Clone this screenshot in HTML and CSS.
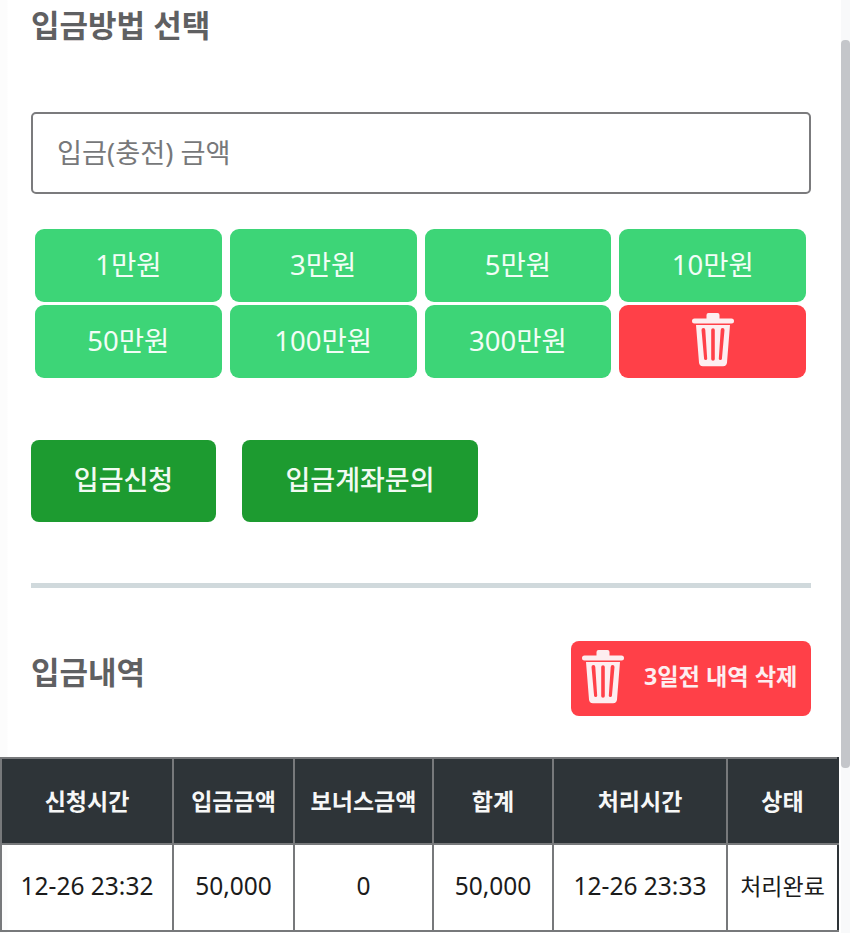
FILE: index.html
```html
<!DOCTYPE html>
<html lang="ko">
<head>
<meta charset="utf-8">
<title>입금</title>
<link rel="stylesheet" href="styles.css">
</head>
<body>
<svg class="sprite" width="0" height="0" aria-hidden="true">
  <symbol id="trash" viewBox="0 0 42 54">
    <path fill-rule="evenodd" d="M16.500 0h9a2 2 0 0 1 2 2v3.500H39.500a2.500 2.500 0 0 1 0 5H2.500a2.500 2.500 0 0 1 0-5H14.500V2a2 2 0 0 1 2-2ZM4 12h34l-3 37.500a4 4 0 0 1-4 3.700H11a4 4 0 0 1-4-3.700L4 12Zm5.500 5 2.600 29a1.600 1.600 0 0 0 3.100-.3L13.300 17a1.900 1.900 0 0 0-3.800 0Zm9.700 0v29a1.800 1.800 0 0 0 3.600 0V17a1.800 1.800 0 0 0-3.600 0Zm9.500 0-1.900 28.700a1.600 1.600 0 0 0 3.100.3l2.600-29a1.900 1.900 0 0 0-3.800 0Z"/>
  </symbol>
</svg>
<div class="viewport">
  <main class="page">
    <div class="content">
      <h2 class="title">입금방법 선택</h2>
      <input class="amount" type="text" placeholder="입금(충전) 금액">
      <div class="presets">
        <button class="preset">1만원</button>
        <button class="preset">3만원</button>
        <button class="preset">5만원</button>
        <button class="preset">10만원</button>
        <button class="preset">50만원</button>
        <button class="preset">100만원</button>
        <button class="preset">300만원</button>
        <button class="preset preset-clear" aria-label="삭제"><svg class="icon-clear"><use href="#trash"/></svg></button>
      </div>
      <div class="actions">
        <button class="action action-request">입금신청</button>
        <button class="action action-inquiry">입금계좌문의</button>
      </div>
      <hr class="divider">
      <div class="history-head">
        <h2 class="title title-history">입금내역</h2>
        <button class="purge"><svg class="icon-purge"><use href="#trash"/></svg><span class="purge-label">3일전 내역 삭제</span></button>
      </div>
    </div>
    <table class="history">
      <colgroup>
        <col class="c1"><col class="c2"><col class="c3"><col class="c4"><col class="c5"><col class="c6">
      </colgroup>
      <thead>
        <tr><th>신청시간</th><th>입금금액</th><th>보너스금액</th><th>합계</th><th>처리시간</th><th>상태</th></tr>
      </thead>
      <tbody>
        <tr><td>12-26 23:32</td><td>50,000</td><td>0</td><td>50,000</td><td>12-26 23:33</td><td class="status">처리완료</td></tr>
      </tbody>
    </table>
  </main>
  <div class="scrollbar"><div class="thumb"></div></div>
</div>
</body>
</html>
```
FILE: styles.css
```css
* { box-sizing: border-box; }
html, body { margin: 0; height: 933px; overflow: hidden; background: #fff; }
body { font-family: "Noto Sans", "Noto Sans CJK KR", sans-serif; }
button { font-family: inherit; border: 0; padding: 0; cursor: pointer; }
.sprite { display: block; position: absolute; }

.viewport { display: flex; height: 933px; overflow: hidden; }
.page { width: 841px; flex: none; background: linear-gradient(90deg, #fcfcfc 0, #fcfcfc 7px, #fff 8px); }
.content { padding: 0 30px 0 31px; }

.title { margin: 0; font-size: 31px; line-height: 50px; font-weight: 700; color: #5f6062; letter-spacing: 0; }

.amount {
  display: block; width: 100%; height: 82px; margin-top: 62px;
  padding: 0 0 2px 24px; font: 400 27.200px "Noto Sans", "Noto Sans CJK KR", sans-serif;
  border: 2px solid #7b7b7d; border-radius: 5px; background: #fff; color: #333; outline: 0;
}
.amount::placeholder { color: #77787a; opacity: 1; }

.presets {
  display: grid; grid-template-columns: repeat(4, 186.800px); grid-auto-rows: 72.500px;
  column-gap: 8px; row-gap: 3.500px; margin: 35px 0 0 4px;
}
.preset {
  display: flex; align-items: center; justify-content: center; padding-bottom: 4px;
  background: #3dd577; color: #f2fdf6; border-radius: 9px; font-size: 27.500px; font-weight: 400;
}
.preset-clear { background: #ff4048; padding-bottom: 0; }
.icon-clear { width: 42px; height: 54px; margin-bottom: 3px; fill: #fdeef0; }

.actions { display: flex; gap: 26px; margin-top: 62px; }
.action {
  height: 82px; padding-bottom: 4px; background: #1d9b30; color: #f1faf2; border-radius: 8px; font-size: 27px; font-weight: 500;
}
.action-request { width: 185px; }
.action-inquiry { width: 236px; }

.divider { height: 5px; margin: 61px 0 0; border: 0; background: #d0d9dc; }

.history-head { display: flex; justify-content: space-between; align-items: flex-start; margin-top: 53px; }
.title-history { margin-top: 6px; }
.purge {
  display: flex; align-items: center; width: 240px; height: 75px; padding: 0 0 2px 11px;
  background: #ff4048; color: #fdeef0; border-radius: 8px; font-size: 23.200px; font-weight: 700;
}
.purge-label { padding-bottom: 4px; }
.icon-purge { width: 42px; height: 54px; margin-right: 20px; fill: #fdeef0; flex: none; }

.history {
  width: 837px; margin-top: 41px; table-layout: fixed; border-collapse: collapse;
}
.c1 { width: 172px; } .c2 { width: 121px; } .c3 { width: 139px; }
.c4 { width: 120px; } .c5 { width: 174px; } .c6 { width: 111px; }
.history th, .history td { padding: 0 0 4px; text-align: center; border: 2px solid #77797b; }
.history th {
  height: 86px; padding-bottom: 2px; background: #2e3438; color: #f6f7f7; font-size: 23px; font-weight: 700;
}
.history td { height: 87px; color: #1b1b1b; font-size: 24.500px; font-weight: 400; }
.history .status { font-size: 23px; }
.history th:last-child { border-right-color: #2e3438; }
.history td:last-child { border-right-color: #2e3438; }

.scrollbar { flex: 1; background: #f8f9fa; }
.thumb { width: 100%; height: 728px; margin-top: 40px; background: #c4c6ca; border-radius: 4px; }
```
